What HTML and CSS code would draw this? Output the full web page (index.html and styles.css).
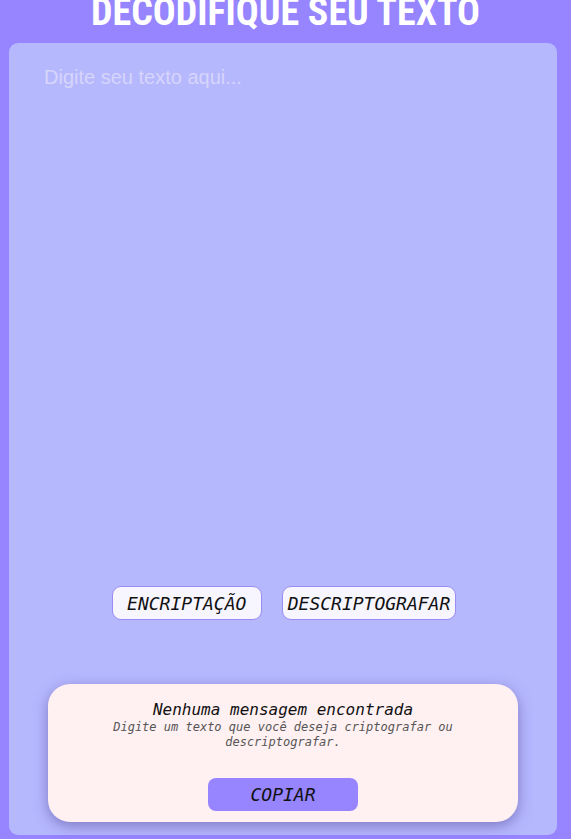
FILE: index.html
```html
<!DOCTYPE html>
<html lang="pt-BR">
<head>
<meta charset="utf-8">
<title>Decodifique seu texto</title>
<link rel="stylesheet" href="styles.css">
</head>
<body>
<h1 class="title">DECODIFIQUE SEU TEXTO</h1>
<main class="card">
  <textarea class="input" placeholder="Digite seu texto aqui..."></textarea>
  <div class="actions">
    <button class="btn">ENCRIPTAÇÃO</button>
    <button class="btn">DESCRIPTOGRAFAR</button>
  </div>
  <section class="result">
    <h2 class="result-title">Nenhuma mensagem encontrada</h2>
    <p class="result-text">Digite um texto que você deseja criptografar ou descriptografar.</p>
    <button class="copy">COPIAR</button>
  </section>
</main>
</body>
</html>
```

FILE: styles.css
```css
html, body {
  margin: 0;
  padding: 0;
  background: #9685ff;
}
body {
  height: 839px;
  overflow: hidden;
}
.title {
  margin: -7px 0 0;
  font-family: "Roboto Condensed", "Liberation Sans Narrow", Roboto, sans-serif;
  font-weight: 700;
  font-size: 38px;
  line-height: 38px;
  color: #ffffff;
  text-align: center;
}
.card {
  box-sizing: border-box;
  margin: 12px 0 0 9px;
  width: 548px;
  height: 792px;
  background: #b6b8fe;
  border-radius: 9px;
  padding: 23px 0 13px;
  display: flex;
  flex-direction: column;
  align-items: center;
}
.input {
  align-self: stretch;
  box-sizing: border-box;
  height: 500px;
  margin: 0 20px 0 35px;
  padding: 0;
  border: none;
  outline: none;
  resize: none;
  background: transparent;
  font-family: "Liberation Sans", Arial, sans-serif;
  font-size: 20px;
  line-height: 23px;
  color: #333;
}
.input::placeholder {
  color: #d6d5fb;
}
.actions {
  display: flex;
  gap: 20px;
  margin-top: 20px;
  margin-left: 2px;
}
.btn, .copy {
  box-sizing: border-box;
  min-width: 150px;
  height: 34px;
  padding: 0 5px;
  font-family: "DejaVu Sans Mono", "Liberation Mono", monospace;
  font-style: italic;
  font-size: 18px;
  color: #111;
  cursor: pointer;
}
.btn {
  background: #f7f6ff;
  border: 1px solid #9a8cf2;
  border-radius: 9px;
}
.result {
  box-sizing: border-box;
  margin-top: 64px;
  width: 470px;
  height: 138px;
  background: #fff0f2;
  border-radius: 22px;
  box-shadow: 0 4px 14px rgba(70, 60, 140, 0.5);
  display: flex;
  flex-direction: column;
  align-items: center;
  padding: 16px 60px 0;
  text-align: center;
}
.result-title {
  margin: 0;
  font-family: "DejaVu Sans Mono", "Liberation Mono", monospace;
  font-style: italic;
  font-weight: 400;
  font-size: 16px;
  line-height: 20px;
  color: #111;
}
.result-text {
  margin: 0;
  font-family: "DejaVu Sans Mono", "Liberation Mono", monospace;
  font-style: italic;
  font-size: 12px;
  line-height: 15px;
  color: #555;
}
.copy {
  margin-top: 28px;
  height: 33px;
  background: #9685ff;
  border: none;
  border-radius: 8px;
}
```
